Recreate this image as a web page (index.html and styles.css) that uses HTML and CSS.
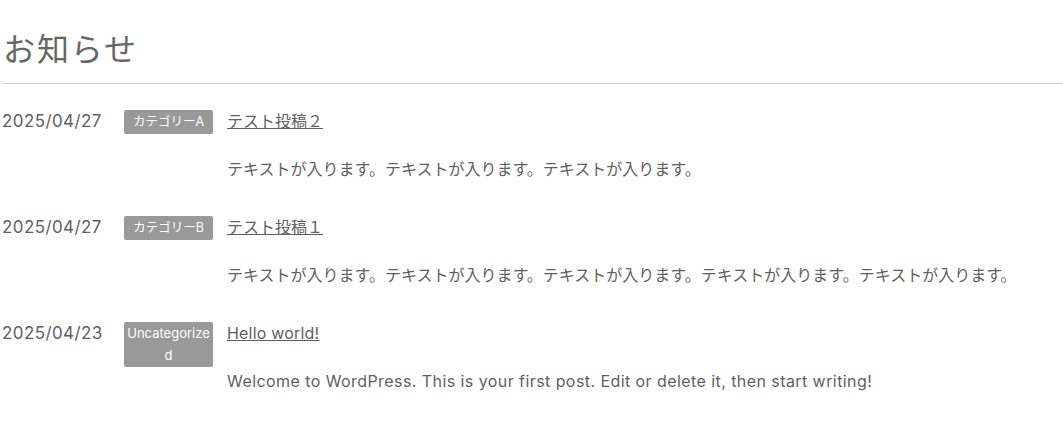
FILE: index.html
```html
<!DOCTYPE html>
<html lang="ja">
<head>
  <meta charset="UTF-8" />
  <meta name="viewport" content="width=device-width, initial-scale=1.0"/>
  <title>お知らせ</title>
  <link rel="stylesheet" href="styles.css">
</head>
<body>
  <section class="news">
    <h2 class="news-title">お知らせ</h2>

    <ul class="news-list">
      <li class="news-item">
        <time class="news-date">2025/04/27</time>
        <span class="news-cat">カテゴリーA</span>
        <div class="news-body">
          <a class="news-link" href="#">テスト投稿２</a>
          <p class="news-excerpt">テキストが入ります。テキストが入ります。テキストが入ります。</p>
        </div>
      </li>
      <li class="news-item">
        <time class="news-date">2025/04/27</time>
        <span class="news-cat">カテゴリーB</span>
        <div class="news-body">
          <a class="news-link" href="#">テスト投稿１</a>
          <p class="news-excerpt">テキストが入ります。テキストが入ります。テキストが入ります。テキストが入ります。テキストが入ります。</p>
        </div>
      </li>
      <li class="news-item">
        <time class="news-date">2025/04/23</time>
        <span class="news-cat" lang="en">Uncategorized</span>
        <div class="news-body">
          <a class="news-link" href="#" lang="en">Hello world!</a>
          <p class="news-excerpt" lang="en">Welcome to WordPress. This is your first post. Edit or delete it, then start writing!</p>
        </div>
      </li>
    </ul>
  </section>
</body>
</html>
```

FILE: styles.css
```css
body {
  margin: 0;
  padding: 0;
  font-family: Inter, "Noto Sans CJK JP", sans-serif;
  color: #5f5f5f;
  background: #fff;
}

.news {
  padding: 0 0 0 2px;
}

.news-title {
  margin: 0;
  padding: 30px 0 13px 1px;
  font-size: 32px;
  font-weight: normal;
  line-height: 40px;
  letter-spacing: 0.06em;
  color: #666;
  border-bottom: 1px solid #d4d4d4;
}

.news-list {
  list-style: none;
  margin: 0;
  padding: 25px 0 0;
  display: flex;
  flex-direction: column;
  gap: 34px;
}

.news-item {
  display: flex;
  align-items: flex-start;
}

.news-date {
  width: 122px;
  flex-shrink: 0;
  font-size: 17px;
  line-height: 24px;
  letter-spacing: 0.4px;
}

.news-cat {
  width: 89px;
  flex-shrink: 0;
  margin: 1px 14px 0 0;
  padding: 1px 2px;
  box-sizing: border-box;
  background: #999;
  color: #fff;
  border-radius: 2px;
  font-size: 12.5px;
  line-height: 21.5px;
  text-align: center;
  word-break: break-all;
}

.news-cat:lang(en) {
  font-size: 13px;
}

.news-body {
  flex: 1;
}

.news-link {
  color: #5f5f5f;
  font-size: 16px;
  line-height: 24px;
  text-decoration: underline;
}

.news-link:lang(en) {
  letter-spacing: 0.2px;
}

.news-excerpt {
  margin: 24px 0 0;
  font-size: 16px;
  line-height: 24px;
}

.news-excerpt:lang(en) {
  letter-spacing: 0.43px;
}
```
